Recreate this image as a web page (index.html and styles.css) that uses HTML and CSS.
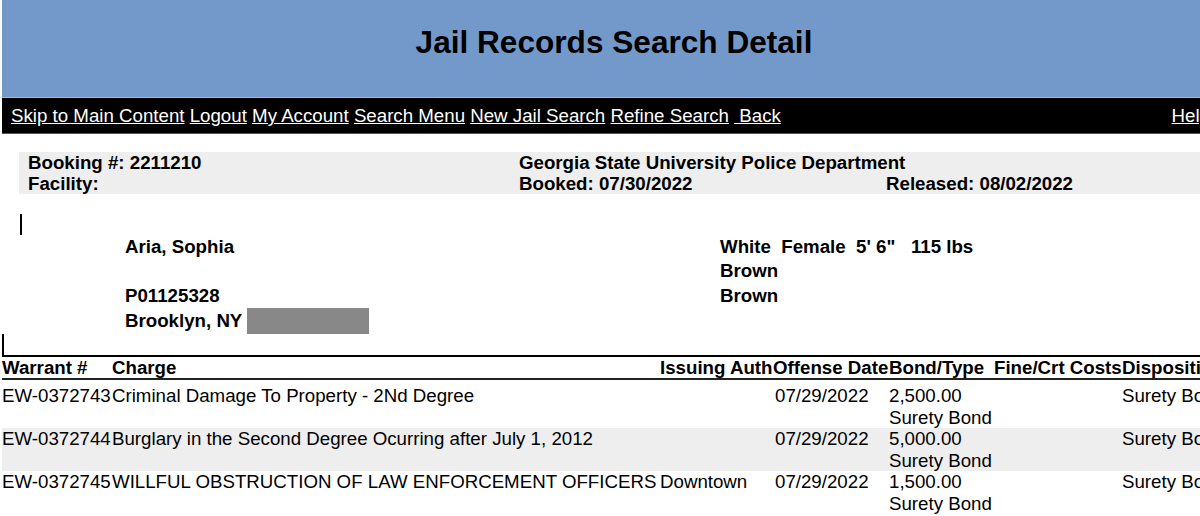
FILE: index.html
```html
<!DOCTYPE html>
<html lang="en">
<head>
    <meta charset="utf-8" />
    <meta name="viewport" content="width=device-width, initial-scale=1.0" />
    <title>Jail Records Search Detail</title>
    <link rel="stylesheet" href="styles.css">
</head>
<body>
    <div class="page">
        <header class="banner">
            <h1>Jail Records Search Detail</h1>
        </header>

        <nav class="menu">
            <div class="menu-links">
                <a href="#main">Skip to Main Content</a> <a href="#">Logout</a> <a href="#">My Account</a> <a href="#">Search Menu</a> <a href="#">New Jail Search</a> <a href="#">Refine Search</a> <a href="#">&nbsp;Back</a>
            </div>
            <a class="help" href="#">Help</a>
        </nav>

        <div class="booking">
            <div>Booking #: 2211210</div>
            <div>Georgia State University Police Department</div>
            <div></div>
            <div>Facility:</div>
            <div>Booked: 07/30/2022</div>
            <div>Released: 08/02/2022</div>
        </div>

        <span class="marker marker-inset"></span>

        <div class="person" id="main">
            <div>
                Aria, Sophia<br>
                <br>
                P01125328<br>
                Brooklyn, NY <span class="redacted"></span>
            </div>
            <div>
                White&nbsp; Female&nbsp; 5' 6"&nbsp;&nbsp; 115 lbs<br>
                Brown<br>
                Brown
            </div>
        </div>

        <span class="marker"></span>

        <table class="charges">
            <colgroup>
                <col class="c-warrant">
                <col class="c-charge">
                <col class="c-auth">
                <col class="c-date">
                <col class="c-bond">
                <col class="c-fine">
                <col>
            </colgroup>
            <thead>
                <tr>
                    <th>Warrant #</th>
                    <th>Charge</th>
                    <th>Issuing Auth</th>
                    <th>Offense Date</th>
                    <th>Bond/Type</th>
                    <th>Fine/Crt Costs</th>
                    <th>Disposition</th>
                </tr>
            </thead>
            <tbody>
                <tr>
                    <td>EW-0372743</td>
                    <td>Criminal Damage To Property - 2Nd Degree</td>
                    <td></td>
                    <td class="date">07/29/2022</td>
                    <td>2,500.00<br>Surety Bond</td>
                    <td></td>
                    <td>Surety Bond</td>
                </tr>
                <tr class="alt">
                    <td>EW-0372744</td>
                    <td>Burglary in the Second Degree Ocurring after July 1, 2012</td>
                    <td></td>
                    <td class="date">07/29/2022</td>
                    <td>5,000.00<br>Surety Bond</td>
                    <td></td>
                    <td>Surety Bond</td>
                </tr>
                <tr>
                    <td>EW-0372745</td>
                    <td>WILLFUL OBSTRUCTION OF LAW ENFORCEMENT OFFICERS</td>
                    <td>Downtown</td>
                    <td class="date">07/29/2022</td>
                    <td>1,500.00<br>Surety Bond</td>
                    <td></td>
                    <td>Surety Bond</td>
                </tr>
            </tbody>
        </table>
    </div>
</body>
</html>
```

FILE: styles.css
```css
body {
    font-family: "Liberation Sans", Arial, sans-serif;
    font-size: 18.7px;
    margin: 0;
    padding: 0;
    background-color: #fff;
    color: #000;
    overflow-x: hidden;
}

.page {
    width: 1224px;
    margin-left: 2px;
}

.banner {
    height: 97px;
    background-color: #7399cb;
    border-bottom: 1px solid #9fb7d8;
}

.banner h1 {
    margin: 0;
    padding-top: 23px;
    font-size: 31.6px;
    line-height: 38px;
    text-align: center;
}

.menu {
    background-color: #000;
    display: flex;
    justify-content: space-between;
    padding: 7px 16px 6px 9px;
    line-height: 21.5px;
    border-bottom: 1px solid #555;
}

.menu a {
    color: #fff;
    text-decoration: underline;
}

.menu-links {
    white-space: nowrap;
}

.booking {
    display: grid;
    grid-template-columns: 491px 367px auto;
    margin: 18px 0 0 17px;
    padding-left: 9px;
    background-color: #eee;
    font-weight: bold;
    line-height: 21px;
    white-space: nowrap;
}

.marker {
    display: block;
    width: 2px;
    height: 21px;
    background-color: #000;
}

.marker-inset {
    margin: 20px 0 0 18px;
}

.person {
    display: grid;
    grid-template-columns: 595px auto;
    padding-left: 123px;
    font-weight: bold;
    line-height: 24.5px;
}

.redacted {
    display: inline-block;
    width: 122px;
    height: 26px;
    vertical-align: -7px;
    background-color: #888;
}

.charges {
    width: 100%;
    table-layout: fixed;
    border-collapse: collapse;
    border-top: 2px solid #000;
}

.c-warrant { width: 110px; }
.c-charge { width: 548px; }
.c-auth { width: 113px; }
.c-date { width: 116px; }
.c-bond { width: 105px; }
.c-fine { width: 128px; }

.charges th {
    padding: 0;
    text-align: left;
    line-height: 21px;
    white-space: nowrap;
    border-bottom: 2px solid #222;
}

.charges td {
    padding: 0;
    line-height: 21.5px;
    vertical-align: top;
    white-space: nowrap;
}

.charges td.date {
    padding-left: 2px;
}

.charges tbody tr:first-child td {
    padding-top: 5px;
}

.charges tr.alt td {
    background-color: #eee;
}
```
